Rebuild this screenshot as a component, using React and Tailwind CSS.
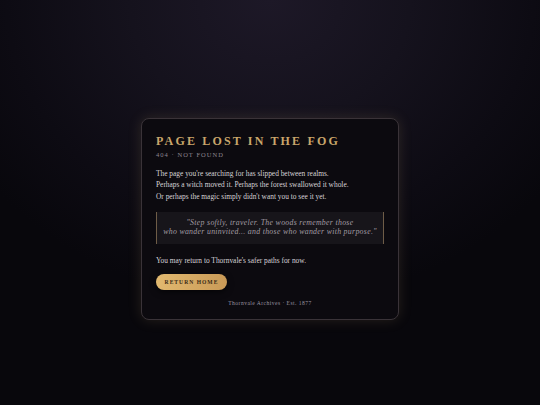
export default function App() {
  return (
    <div
      className="min-h-screen w-full flex items-center justify-center pt-[33px] bg-[#09080d] antialiased"
      style={{
        backgroundImage:
          "radial-gradient(ellipse 65% 75% at 50% 0%, #1d1827 0%, #15121d 40%, #0d0b13 75%, #08070c 100%)",
      }}
    >
      <div className="w-[258px] rounded-[8px] border border-[#3a3338] bg-[#0c0a0f] px-[14px] pt-[14px] pb-[12px] shadow-[0_0_14px_rgba(201,168,106,0.16)] font-['Liberation_Serif',serif]">
        <h1 className="text-[12px] leading-[16px] font-bold tracking-[0.18em] text-[#c9a66b]">
          PAGE LOST IN THE FOG
        </h1>
        <div className="mt-[1px] text-[6.5px] tracking-[0.16em] text-[#8c8690]">
          404 · NOT FOUND
        </div>

        <p className="mt-[8px] text-[7.4px] leading-[11.5px] text-[#d6d2d6]">
          The page you're searching for has slipped between realms.
          <br />
          Perhaps a witch moved it. Perhaps the forest swallowed it whole.
          <br />
          Or perhaps the magic simply didn't want you to see it yet.
        </p>

        <blockquote className="mt-[10px] border-x border-[#6e5c47] bg-[#17151a] py-[7px] px-[4px] text-center italic text-[7.8px] leading-[8.6px] tracking-[0.04em] text-[#a29ca3]">
          "Step softly, traveler. The woods remember those
          <br />
          who wander uninvited... and those who wander with purpose."
        </blockquote>

        <p className="mt-[11px] text-[7.4px] leading-[12px] text-[#d6d2d6]">
          You may return to Thornvale's safer paths for now.
        </p>

        <button className="mt-[7px] h-[16px] w-[71px] rounded-full bg-gradient-to-r from-[#e2b970] to-[#c99a57] text-[5.6px] font-bold tracking-[0.18em] text-[#3b2b17] shadow-[0_2px_6px_rgba(0,0,0,0.6)]">
          RETURN HOME
        </button>

        <div className="mt-[8px] text-center text-[5.6px] tracking-[0.08em] text-[#9a94a0]">
          Thornvale Archives · Est. 1877
        </div>
      </div>
    </div>
  );
}
